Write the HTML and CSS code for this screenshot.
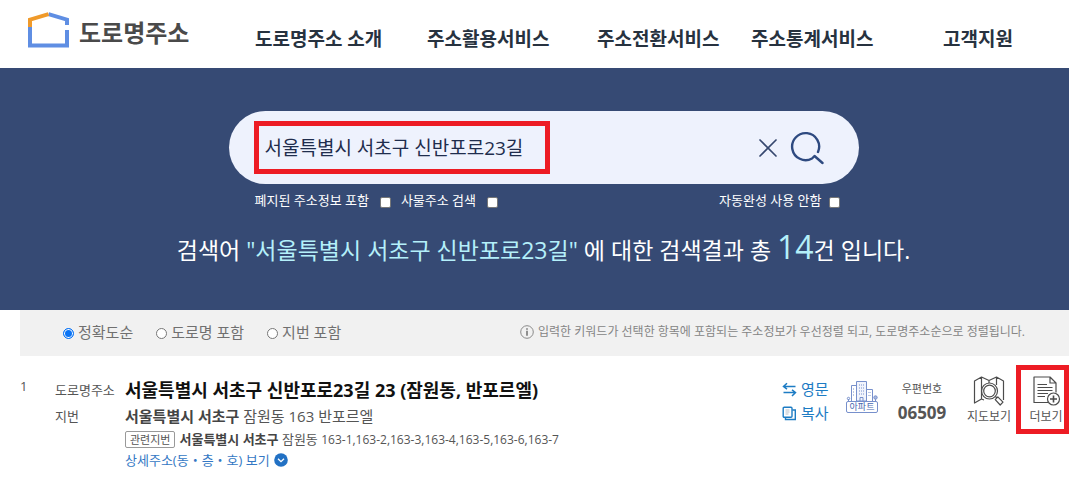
FILE: index.html
```html
<!DOCTYPE html>
<html lang="ko">
<head>
<meta charset="utf-8">
<title>도로명주소</title>
<link rel="stylesheet" href="styles.css">
</head>
<body>
<header class="header">
  <a class="logo" href="#">
    <svg class="logo-mark" viewBox="0 0 43 38" aria-hidden="true">
      <g fill="none" stroke-width="4">
        <path d="M3 16V34.500H40V19" stroke="#5f8ee3"/>
        <path d="M21.500 3.200L40 8.700V14" stroke="#5f8ee3"/>
        <path d="M3 16V8.700L21.500 3.200" stroke="#f09a2a"/>
      </g>
    </svg>
    <span class="logo-name">도로명주소</span>
  </a>
  <nav class="nav">
    <a href="#">도로명주소 소개</a>
    <a href="#">주소활용서비스</a>
    <a href="#">주소전환서비스</a>
    <a href="#">주소통계서비스</a>
    <a href="#">고객지원</a>
  </nav>
</header>

<section class="hero">
  <form class="search">
    <div class="search-box">
      <input class="search-input" type="text" aria-label="주소 검색" value="서울특별시 서초구 신반포로23길">
      <button class="icon-button" type="reset" aria-label="지우기">
        <svg width="20" height="20" viewBox="0 0 20 20"><path d="M2 2L18 18M18 2L2 18" fill="none" stroke="#36486f" stroke-width="1.700" stroke-linecap="round"/></svg>
      </button>
      <button class="icon-button" type="submit" aria-label="검색">
        <svg width="34" height="34" viewBox="0 0 34 34"><path d="M28 21A13.500 13.500 0 1 0 22 27.500L24.500 25L32.500 32" fill="none" stroke="#2e4a80" stroke-width="2.400" stroke-linecap="round" stroke-linejoin="round"/></svg>
      </button>
      <span class="mark mark-search"></span>
    </div>
    <div class="options">
      <label class="option">폐지된 주소정보 포함 <input class="check" type="checkbox"></label>
      <label class="option">사물주소 검색 <input class="check" type="checkbox"></label>
      <label class="option option-end">자동완성 사용 안함 <input class="check" type="checkbox"></label>
    </div>
  </form>
  <p class="summary">검색어 <span class="accent">"서울특별시 서초구 신반포로23길"</span> 에 대한 검색결과 총 <span class="accent count">14</span>건 입니다.</p>
</section>

<main class="results">
  <div class="sort">
    <label class="sort-item"><input class="radio" type="radio" name="sort" checked>정확도순</label>
    <label class="sort-item"><input class="radio" type="radio" name="sort">도로명 포함</label>
    <label class="sort-item"><input class="radio" type="radio" name="sort">지번 포함</label>
    <p class="notice">
      <svg width="14" height="14" viewBox="0 0 14 14" aria-hidden="true"><circle cx="7" cy="7" r="6.300" fill="none" stroke="#8a8a8a"/><path d="M7 5.800V10.800M7 3.200V4.700" stroke="#666" stroke-width="1.400"/></svg>
      <span>입력한 키워드가 선택한 항목에 포함되는 주소정보가 우선정렬 되고, 도로명주소순으로 정렬됩니다.</span>
    </p>
  </div>

  <article class="item">
    <span class="number">1</span>
    <div class="address">
      <span class="label">도로명주소</span>
      <a class="road" href="#">서울특별시 서초구 신반포로23길 23 (잠원동, 반포르엘)</a>
      <span class="label">지번</span>
      <span class="lot"><b>서울특별시 서초구</b> 잠원동 163 반포르엘</span>
      <span class="related"><span class="tag">관련지번</span><span><b>서울특별시 서초구</b> 잠원동 <span class="lots">163-1,163-2,163-3,163-4,163-5,163-6,163-7</span></span></span>
      <a class="detail" href="#">상세주소(동・층・호) 보기
        <svg width="14" height="14" viewBox="0 0 14 14" aria-hidden="true"><circle cx="7" cy="7" r="6.800" fill="#2271c4"/><path d="M4 5.700L7 8.700L10 5.700" fill="none" stroke="#fff" stroke-width="1.300"/></svg>
      </a>
    </div>
    <div class="side">
      <div class="tools">
        <button class="tool" type="button">
          <svg width="15" height="15" viewBox="0 0 15 15" fill="none" stroke="#1d7cc4" stroke-width="1.500" aria-hidden="true"><path d="M13.500 4.500H1.500M5 1.200L1.500 4.500L5 7.200M1.500 10.500H13.500M10 7.800L13.500 10.500L10 14"/></svg>영문
        </button>
        <button class="tool" type="button">
          <svg width="15" height="15" viewBox="0 0 15 15" fill="none" stroke="#1d7cc4" stroke-width="1.400" aria-hidden="true"><rect x="1.200" y="1.200" width="8.800" height="10" rx="1"/><path d="M3.500 11.500V13.500H13.300V4H10.300"/><path d="M3.500 4H7.500M3.500 6H7.500M3.500 8H6.500" stroke="#b5bdc6" stroke-width="1"/></svg>복사
        </button>
      </div>
      <div class="building">
        <svg width="32" height="21" viewBox="0 0 32 21" fill="none" stroke="#7790cc" aria-hidden="true">
          <path d="M10.500 1.500H20.500V21H10.500Z" fill="#f1f4fc"/>
          <path d="M5.500 21V5.500H10.500M20.500 9.500H26.500V21"/>
          <path d="M13 5H18M13 8H18M13 11H18M13 14H18M7 9H9M7 12H9M7 15H9M22.500 12.500H25M22.500 15.500H25" stroke-dasharray="1 1"/>
          <path d="M14 21V17.500H17V21M2.500 21V19M29.500 21V18"/><circle cx="2.500" cy="18.500" r="1.200"/><circle cx="29.500" cy="17.500" r="1.700" fill="#aab9e0"/>
        </svg>
        <span class="building-name">아파트</span>
      </div>
      <div class="zip"><span>우편번호</span><strong>06509</strong></div>
      <div class="actions">
        <button class="action" type="button">
          <svg width="32" height="32" viewBox="0 0 32 32" fill="none" stroke="#4c4c4c" stroke-width="1.200" stroke-linejoin="round" aria-hidden="true">
            <path d="M11 25L8.500 24L1.500 28V6L8.500 2L16 5.500L23.500 2L30.500 6V25M8.500 2V24M23.500 2V10M16 5.500V8"/>
            <circle cx="16.500" cy="16" r="8"/><circle cx="16.500" cy="16" r="5.800"/>
            <path d="M22.500 21.500L24 23M24.800 21.800L30 27.200L27.200 30L22.200 24.600Z"/>
          </svg>
          <span>지도보기</span>
        </button>
        <button class="action" type="button">
          <svg width="32" height="32" viewBox="0 0 32 32" fill="none" stroke="#4c4c4c" stroke-width="1.200" stroke-linejoin="round" aria-hidden="true">
            <path d="M18 27.500H4V2H20L26 8V17.500M20 2V8H26"/>
            <path d="M7.500 9.500H17M7.500 12.500H22.500M7.500 15.500H22.500M7.500 18.500H18M7.500 21.500H15"/>
            <circle cx="23.500" cy="24" r="6"/><path d="M20 24H27M23.500 20.500V27.500" stroke-width="1.600"/>
          </svg>
          <span>더보기</span>
          <span class="mark mark-more"></span>
        </button>
      </div>
    </div>
  </article>
</main>
</body>
</html>
```
FILE: styles.css
```css
* {
  box-sizing: border-box;
}

body {
  margin: 0;
  background: #fff;
  color: #555;
  font-family: "Open Sans", "Noto Sans CJK KR", sans-serif;
  font-size: 13px;
  line-height: 20px;
}

a {
  color: inherit;
  text-decoration: none;
}

p {
  margin: 0;
}

button {
  padding: 0;
  border: 0;
  background: none;
  color: inherit;
  font: inherit;
  cursor: pointer;
}

svg {
  display: block;
  flex: none;
}

.header {
  display: flex;
  align-items: center;
  padding: 0 0 0 27px;
  min-height: 68px;
}

.logo {
  display: flex;
  align-items: center;
  gap: 9px;
  flex: 0 0 228px;
  padding-bottom: 8px;
  color: #4a4a4a;
  font-size: 24px;
  font-weight: 700;
  line-height: 36px;
}

.logo-mark {
  width: 43px;
  height: 38px;
}

.logo-name {
  padding-top: 6px;
}

.nav {
  display: grid;
  grid-template-columns: 172fr 170fr 154fr 192fr 126fr;
  flex: 1;
  padding-top: 9px;
  color: #27323f;
  font-size: 19px;
  font-weight: 700;
  line-height: 28px;
  white-space: nowrap;
}

.hero {
  display: flex;
  flex-direction: column;
  align-items: center;
  padding: 43px 0 40px 18px;
  background: #364a74;
  color: #fff;
}

.search {
  width: 100%;
  max-width: 630px;
}

.search-box {
  position: relative;
  display: flex;
  align-items: center;
  gap: 12px;
  height: 73px;
  padding: 0 35px 0 36px;
  border-radius: 37px;
  background: #eef2fd;
}

.search-input {
  flex: 1;
  min-width: 0;
  padding: 0;
  border: 0;
  outline: 0;
  background: none;
  color: #1f2d4d;
  font: inherit;
  font-size: 19px;
  line-height: 28px;
}

.mark {
  position: absolute;
  border: 5px solid #ed1c24;
  pointer-events: none;
}

.mark-search {
  top: 10px;
  left: 25px;
  width: 296px;
  height: 53px;
}

.options {
  display: flex;
  gap: 10px;
  padding: 6px 19px 0 26px;
}

.option {
  display: flex;
  align-items: center;
  gap: 11px;
}

.option-end {
  gap: 7px;
  margin-left: auto;
}

.check {
  appearance: none;
  width: 11px;
  height: 11px;
  margin: 4px 0 0;
  border: 1px solid #777;
  border-radius: 2px;
  background: #fff;
}

.summary {
  padding-top: 17px;
  font-size: 23px;
  line-height: 40px;
}

.accent {
  color: #b4f0fa;
}

.count {
  font-size: 32px;
}

.results {
  padding-left: 20px;
}

.sort {
  display: flex;
  align-items: center;
  gap: 23px;
  min-height: 46px;
  padding: 0 44px 2px 43px;
  background: #f1f1f1;
  color: #707070;
}

.sort-item {
  display: flex;
  align-items: center;
  gap: 4px;
  font-size: 15px;
}

.radio {
  appearance: none;
  width: 11px;
  height: 11px;
  margin: 2px 0 0;
  border: 1px solid #777;
  border-radius: 50%;
  background: #fff;
}

.radio:checked {
  border-color: #0b74f5;
  background: #0b74f5;
  box-shadow: inset 0 0 0 1px #fff;
}

.notice {
  display: flex;
  align-items: center;
  gap: 4px;
  margin-left: auto;
  color: #858585;
  font-size: 12px;
}

.item {
  display: flex;
  align-items: flex-start;
  padding-top: 21px;
}

.number {
  flex: 0 0 35px;
  line-height: 18px;
}

.address {
  display: grid;
  grid-template-columns: 60px 1fr;
  gap: 0 10px;
  flex: 1;
}

.label {
  line-height: 26px;
}

.road {
  color: #111;
  font-size: 18px;
  font-weight: 700;
  line-height: 26px;
}

.lot {
  font-size: 15px;
  line-height: 26px;
}

.lot b,
.related b {
  color: #444;
}

.related,
.detail {
  display: flex;
  align-items: center;
  gap: 4px;
  grid-column: 2;
  line-height: 20px;
}

.tag {
  padding: 0 4px;
  border: 1px solid #999;
  border-radius: 2px;
  font-size: 11px;
  line-height: 15px;
}

.lots {
  font-size: 12px;
}

.detail {
  color: #3478c4;
}

.side {
  display: flex;
  align-items: flex-start;
  gap: 16px;
}

.tools {
  display: grid;
  width: 48px;
}

.tool {
  display: flex;
  align-items: center;
  gap: 4px;
  color: #1d7cc4;
  font-size: 15px;
  line-height: 24px;
}

.building {
  width: 32px;
  padding-top: 3px;
}

.building-name {
  display: block;
  border: 1px solid #7790cc;
  border-radius: 2px;
  color: #4868b0;
  font-size: 9px;
  line-height: 10px;
  text-align: center;
}

.zip {
  display: grid;
  width: 56px;
  padding-top: 2px;
  text-align: center;
  font-size: 11px;
}

.zip strong {
  font-size: 17px;
  line-height: 28px;
}

.actions {
  display: flex;
  gap: 11px;
}

.action {
  position: relative;
  display: flex;
  flex-direction: column;
  align-items: center;
  gap: 1px;
  width: 46px;
  margin-top: -2px;
  font-size: 12px;
  line-height: 18px;
}

.mark-more {
  top: -10px;
  right: 0;
  width: 53px;
  height: 69px;
}
```
